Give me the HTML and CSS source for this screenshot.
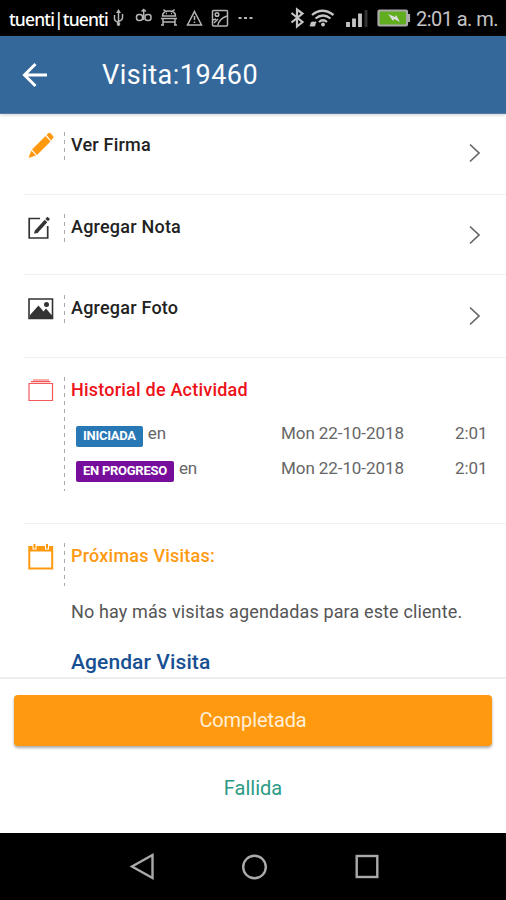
FILE: index.html
```html
<!DOCTYPE html>
<html lang="es">
<head>
<meta charset="utf-8">
<title>Visita</title>
<link rel="stylesheet" href="styles.css">
</head>
<body>
<div class="status">
  <span class="carrier">tuenti|tuenti</span>
  <svg class="status-left" width="146" height="36" viewBox="110 0 146 36" fill="none" stroke="#b5b5b5" stroke-width="1.500">
    <path d="M118.500 11v15M114.500 15v4q0 2 4 3.500M122.500 14v4q0 2-4 3.500"/>
    <path d="M116 13l2.500-4 2.500 4z" fill="#b5b5b5" stroke="none"/><circle cx="118.500" cy="24" r="1.800" fill="#b5b5b5" stroke="none"/>
    <rect x="136.500" y="14.500" width="6" height="6" rx="2.500"/><rect x="145" y="14.500" width="6" height="6" rx="2.500"/><path d="M143.700 20V10M141.500 11.500l2.200-2 2.200 2"/>
    <path d="M162.500 16q0-5 6.500-5t6.500 5zM163.500 9.500l2 2M174.500 9.500l-2 2M161 18.500h16M163 19v6M175 19v6M163 22h12M161 25h3M174 25h3"/><path d="M166 13.500h1M171 13.500h1"/>
    <path d="M194.500 11.500l7 13.500h-14zM194.500 16v4M194.500 21.500v1.500"/>
    <rect x="212.500" y="10.500" width="15" height="15.500" rx="1"/><circle cx="217" cy="14.500" r="1.800"/><path d="M214 23l4-4M218 25q1-6 9-9M213 20l3-1"/>
    <path d="M238.500 18h3M244 18h3M249.500 18h3" stroke-width="2"/>
  </svg>
  <svg class="status-right" width="125" height="36" viewBox="288 0 125 36" fill="none" stroke="#c5c5c5" stroke-width="2.200">
    <path d="M291.500 13l11 9-5.500 4.500V9.500l5.500 4-11 9"/>
    <path d="M312 15q10-8.500 21.500 0M315.500 18.500q7.500-6 15 0M319 22q4-3.500 8 0"/>
    <circle cx="323" cy="24.500" r="1.900" fill="#c5c5c5" stroke="none"/><circle cx="313" cy="24" r="2.600" fill="#c5c5c5" stroke="none"/><path d="M310 26l6-4" stroke-width="2"/>
    <path d="M348 22v5M354 18.500V27M360 13.500V27" stroke-width="3.800"/><path d="M366 10v17" stroke="#333" stroke-width="3"/>
    <rect x="378.500" y="10.500" width="28.500" height="15" rx="1" fill="#60ad20" stroke="#aaa"/><path d="M409 14v8" stroke="#aaa"/>
    <path d="M388 14l7 3 1-2 4 7-6-3-1 2z" fill="#ddd" stroke="none"/>
  </svg>
  <span class="clock">2:01 a. m.</span>
</div>
<header class="bar">
  <svg class="back" width="26" height="26" viewBox="0 0 26 26" fill="none" stroke="#fff" stroke-width="3"><path d="M25 13H3M13.500 2L2.500 13l11 11"/></svg>
  <h1 class="title">Visita:19460</h1>
</header>
<main class="list">
  <section class="row row-firma">
    <svg class="icon" width="26" height="28" viewBox="0 0 26 28" fill="#ff9a10"><path d="M18.500 3l2-2q1-.8 2 .2l2.700 3q.8 1-.2 2L23 8.500zM17.500 4l5 5.500L9 23 4 17.500zM3.300 18.500L8 23.500.5 26z"/></svg>
    <div class="rule"></div><h2 class="name">Ver Firma</h2>
    <svg class="chev" width="12" height="20" viewBox="0 0 12 20"><path d="M1 1.500L10 10 1 18.500"/></svg>
  </section>
  <section class="row row-nota">
    <svg class="icon" width="26" height="28" viewBox="0 0 26 28" fill="none" stroke="#333" stroke-width="1.700"><path d="M12 4.500H1.200V24h18.500V12"/><path d="M8 18L18 7" stroke-width="3.500"/><path d="M18.700 6.200l2-2.400" stroke-width="3.500"/><path d="M6 19.800l1-3.500 3 2.500z" fill="#333" stroke="none"/></svg>
    <div class="rule"></div><h2 class="name">Agregar Nota</h2>
    <svg class="chev" width="12" height="20" viewBox="0 0 12 20"><path d="M1 1.500L10 10 1 18.500"/></svg>
  </section>
  <section class="row row-foto">
    <svg class="icon" width="26" height="28" viewBox="0 0 26 28" fill="#333"><path d="M1 4h23.500v19.500H1z" fill="none" stroke="#333" stroke-width="1.600"/><path d="M2 20l8.500-9.500 5 6 2.500-3 6 7v3H2z"/><circle cx="18.500" cy="9.500" r="2.500"/></svg>
    <div class="rule"></div><h2 class="name">Agregar Foto</h2>
    <svg class="chev" width="12" height="20" viewBox="0 0 12 20"><path d="M1 1.500L10 10 1 18.500"/></svg>
  </section>
  <section class="row row-historial">
    <svg class="icon" width="26" height="28" viewBox="0 0 26 28" fill="none" stroke="#f25a5a" stroke-width="1.200"><path d="M1 6.500h23.500v17H1zM3 4.700h19.500M5 3h16"/></svg>
    <div class="rule"></div>
    <div class="body">
      <h2 class="name red">Historial de Actividad</h2>
      <div class="event first"><span class="what"><b class="tag blue">INICIADA</b>en</span><span class="date">Mon 22-10-2018</span><span class="time">2:01</span></div>
      <div class="event"><span class="what"><b class="tag purple">EN PROGRESO</b>en</span><span class="date">Mon 22-10-2018</span><span class="time">2:01</span></div>
    </div>
  </section>
  <section class="row row-proximas">
    <svg class="icon" width="26" height="28" viewBox="0 0 26 28" fill="none" stroke="#ff9a10"><path d="M1.300 4h22.900v21.500H1.300z" stroke-width="2"/><path d="M1 6h24" stroke-width="5"/><path d="M6.500 2v4.500M19 2v4.500" stroke="#fff" stroke-width="4"/><path d="M6.500 1v4.500M19 1v4.500" stroke-width="2"/></svg>
    <div class="rule"></div>
    <div class="body">
      <h2 class="name orange">Próximas Visitas:</h2>
      <p class="empty">No hay más visitas agendadas para este cliente.</p>
      <a class="schedule">Agendar Visita</a>
    </div>
  </section>
</main>
<footer class="actions">
  <button class="done">Completada</button>
  <button class="fail">Fallida</button>
</footer>
<nav class="nav">
  <svg width="506" height="67" viewBox="0 0 506 67" fill="none" stroke="#aaa" stroke-width="2.400"><path d="M152.500 22v23L132 33.500z"/><circle cx="254.500" cy="34" r="11.300"/><rect x="356.700" y="23" width="20.600" height="21"/></svg>
</nav>
</body>
</html>
```

FILE: styles.css
```css
* { box-sizing: border-box; }
body { margin: 0; width: 506px; height: 900px; overflow: hidden; display: flex; flex-direction: column; background: #fff; font-family: Roboto, sans-serif; color: #222; }
h1, h2, p { margin: 0; }
svg { display: block; flex: none; }
.status { flex: none; height: 36px; display: flex; background: #000; color: #fff; white-space: nowrap; }
.carrier { width: 101px; margin-left: 9px; font-size: 17.5px; line-height: 38px; font-family: "Noto Sans", sans-serif; font-weight: 500; letter-spacing: -.85px; }
.status-right { margin-left: 32px; }
.clock { margin-left: 3px; font-size: 20px; line-height: 39px; letter-spacing: -.55px; color: #c4c4c4; }
.bar { flex: none; height: 78px; display: flex; align-items: center; background: #34689b; border-bottom: 1px solid #57799f; color: #fff; box-shadow: 0 1px 3px #8886; z-index: 1; }
.back { margin-left: 22px; }
.title { margin-left: 54px; font-size: 27px; font-weight: 400; line-height: 32px; letter-spacing: .5px; }
.list { flex: none; height: 563px; padding-left: 24px; overflow: hidden; }
.row { display: flex; align-items: flex-start; border-bottom: 1px solid #f0f0f0; padding-top: 19px; }
.row-firma { height: 81px; padding-top: 18px; }
.row-nota { height: 80px; }
.row-foto { height: 83px; padding-top: 20px; }
.row-historial { height: 166px; }
.row-proximas { height: 170px; border: 0; }
.icon { margin-left: 4px; }
.rule { width: 1px; height: 29px; margin: 0 6px 0 10px; background: repeating-linear-gradient(#aaa 0 4px, transparent 4px 8px); }
.row-historial .rule { height: 114px; }
.row-proximas .rule { height: 43px; }
.name { font-size: 18px; font-weight: 500; line-height: 25px; letter-spacing: .22px; }
.chev { margin: 11px 25px 0 auto; fill: none; stroke: #666; stroke-width: 1.7; }
.body { flex: 1; }
.red { color: #ee1118; }
.orange { color: #ff9a10; }
.event { display: grid; grid-template-columns: 210px 174px 1fr; height: 35px; font-size: 17px; line-height: 24px; letter-spacing: -.08px; color: #666; }
.first { margin-top: 19px; }
.what { display: flex; padding-left: 5px; }
.tag { height: 21px; margin: 5px 5px 0 0; padding: 0 7px; border-radius: 2px; color: #fff; font-size: 13px; font-weight: 700; line-height: 19px; letter-spacing: -.27px; }
.blue { background: #2878b6; }
.purple { background: #760d9b; }
.empty { margin-top: 32px; font-size: 18px; line-height: 24px; letter-spacing: .13px; color: #555; }
.schedule { display: block; margin-top: 25px; font-size: 21px; font-weight: 500; line-height: 26px; letter-spacing: .1px; color: #175092; }
.actions { flex: none; height: 156px; padding: 16px 14px 0; border-top: 2px solid #eee; }
button { display: block; width: 100%; border: 0; font-family: inherit; }
.done { height: 51px; padding: 0 0 2px; border-radius: 4px; background: #ff9a10; color: #ffefd9; font-size: 20px; letter-spacing: -.1px; box-shadow: 0 2px 3px #0005; }
.fail { height: 40px; margin-top: 22px; background: none; color: #2d9a86; font-size: 20px; }
.nav { flex: none; height: 67px; background: #000; }
```
